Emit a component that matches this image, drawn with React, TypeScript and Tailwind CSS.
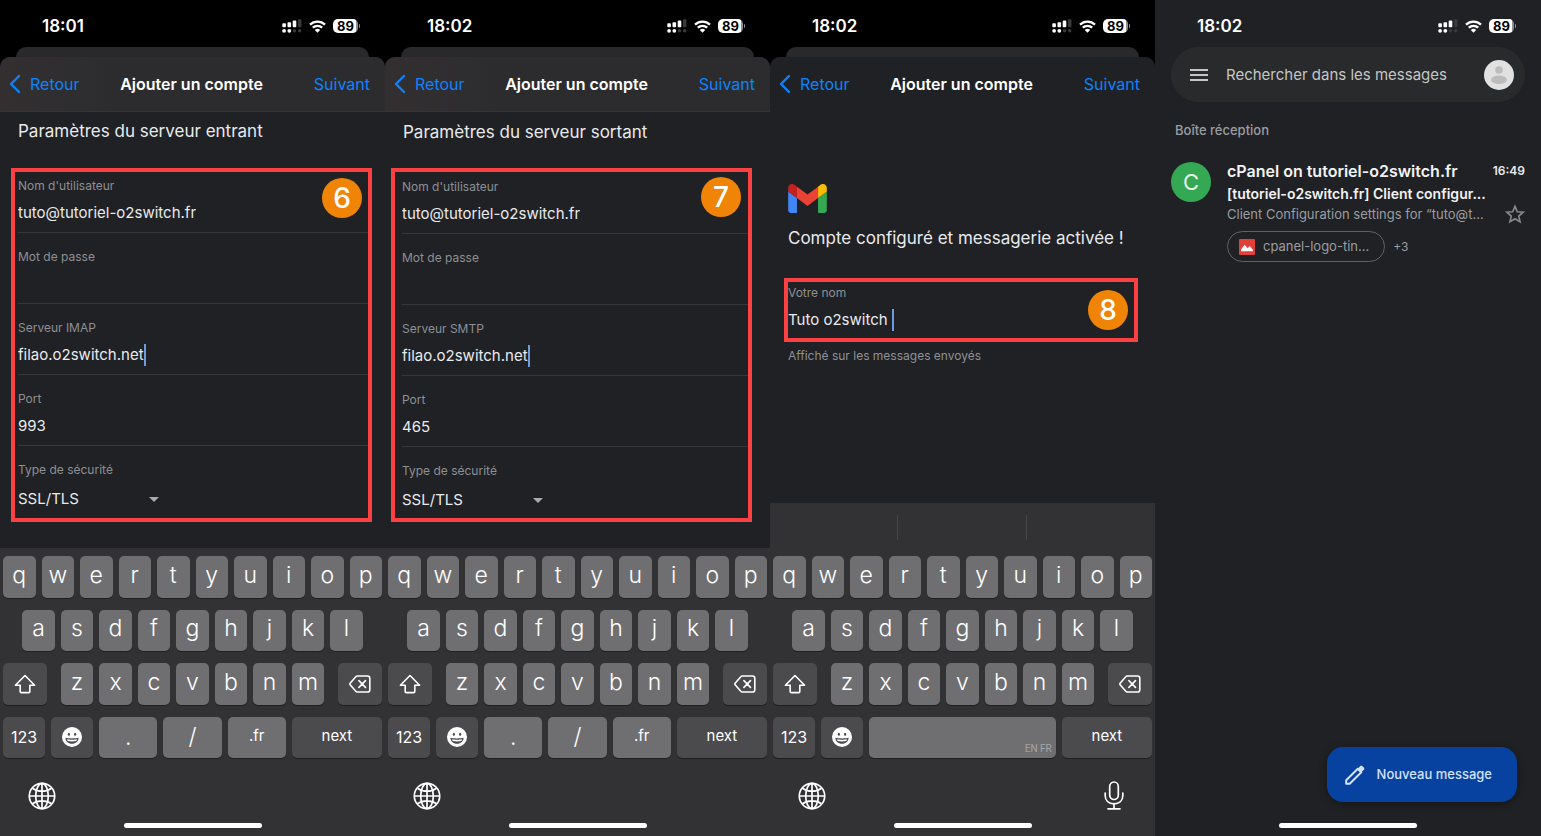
import React from "react";

function SignalIcon() {
  return (
    <svg viewBox="0 0 20 14" className="h-[14px] w-5" fill="#fff" aria-hidden="true">
      <rect x="0.3" y="4.2" width="3.6" height="4" rx="0.9" />
      <rect x="5.5" y="3.2" width="3.6" height="5" rx="0.9" />
      <rect x="10.7" y="1.5" width="3.6" height="6.7" rx="0.9" />
      <rect x="15.9" y="0.2" width="3.6" height="8" rx="0.9" fill="#3a3a3c" />
      <circle cx="2.1" cy="11.8" r="1.9" />
      <circle cx="7.3" cy="11.8" r="1.9" />
      <circle cx="12.5" cy="11.8" r="1.7" fill="#3a3a3c" />
      <circle cx="17.7" cy="11.8" r="1.7" fill="#3a3a3c" />
    </svg>
  );
}

function WifiIcon() {
  return (
    <svg viewBox="0 0 17 13" className="h-[13px] w-[17px]" aria-hidden="true">
      <path d="M1 4.7a10.8 10.8 0 0 1 15 0" fill="none" stroke="#fff" strokeWidth="2.3" />
      <path d="M3.8 7.7a6.8 6.8 0 0 1 9.4 0" fill="none" stroke="#fff" strokeWidth="2.3" />
      <path d="M8.5 12.7 5.8 10a3.9 3.9 0 0 1 5.4 0Z" fill="#fff" />
    </svg>
  );
}

function StatusBar({ time }: { time: string }) {
  return (
    <div className="flex h-[47px] shrink-0 items-start justify-between pt-[14px] pr-[25px] pl-[42px]">
      <span className="text-[17px] leading-6 font-semibold text-white">{time}</span>
      <div className="flex h-6 items-center gap-[7px]">
        <SignalIcon />
        <WifiIcon />
        <div className="flex items-center gap-px">
          <div className="flex h-[14px] w-[25px] items-center justify-center rounded-[5px] bg-linear-to-r from-white from-92% to-[#8e8e93] to-92% text-[13px] leading-[14px] font-bold text-black">
            89
          </div>
          <span className="h-1 w-px rounded-r bg-[#8e8e93]" />
        </div>
      </div>
    </div>
  );
}

function SheetHeader({ tinted }: { tinted: boolean }) {
  const look = tinted
    ? "border-[#343437] bg-linear-to-r from-[#332f31] via-[#2c2c2e] via-30% to-[#2c2c2e]"
    : "border-[#202124] bg-[#202124]";
  return (
    <header
      className={`grid h-[55px] shrink-0 grid-cols-[1fr_auto_1fr] items-center rounded-t-[10px] border-b pr-[15px] pl-[9px] text-[16px] leading-6 ${look}`}
    >
      <button type="button" className="flex items-center gap-[9px] text-[#0a84ff]">
        <svg viewBox="0 0 12 20" className="h-5 w-3" fill="none" stroke="currentColor" strokeWidth="2.4" strokeLinecap="round" strokeLinejoin="round" aria-hidden="true">
          <path d="M10 2 2 10l8 8" />
        </svg>
        Retour
      </button>
      <h1 className="pl-1 font-semibold text-white">Ajouter un compte</h1>
      <button type="button" className="justify-self-end text-[#0a84ff]">
        Suivant
      </button>
    </header>
  );
}

type FieldProps = {
  id: string;
  label: string;
  value: string;
  type?: string;
  caret?: boolean;
  underlined?: boolean;
};

function Field({ id, label, value, type = "text", caret = false, underlined = true }: FieldProps) {
  return (
    <div className={underlined ? "border-b border-[#37383b] pb-[7px]" : "pb-[6px]"}>
      <label htmlFor={id} className="block text-[12px] leading-4 text-[#8d9094]">
        {label}
      </label>
      <div className="mt-[7px] flex h-6 items-center">
        <input
          id={id}
          type={type}
          defaultValue={value}
          className="field-sizing-content min-w-2 bg-transparent text-[15px] leading-6 whitespace-pre text-[#e8eaed] outline-none"
        />
        {caret && <span className="h-[22px] w-[2px] bg-[#6f9ae0]" />}
      </div>
    </div>
  );
}

function StepBadge({ n, place }: { n: number; place: string }) {
  return (
    <span
      className={`absolute flex size-10 items-center justify-center rounded-full bg-[#f08407] text-[28px] leading-10 font-medium text-white ${place}`}
    >
      {n}
    </span>
  );
}

type ServerFormProps = {
  prefix: string;
  title: string;
  hostLabel: string;
  port: string;
  step: number;
  titleSpace: string;
  boxSpace: string;
  badgePlace: string;
};

function ServerForm({ prefix, title, hostLabel, port, step, titleSpace, boxSpace, badgePlace }: ServerFormProps) {
  return (
    <form>
      <div className="h-14">
        <h2 className={`pl-[18px] text-[17px] leading-6 text-[#e8eaed] ${titleSpace}`}>{title}</h2>
      </div>
      <div className={`relative flex flex-col gap-4 border-4 border-[#fd4142] ${boxSpace}`}>
        <Field id={`${prefix}-user`} label="Nom d'utilisateur" value="tuto@tutoriel-o2switch.fr" />
        <Field id={`${prefix}-pass`} label="Mot de passe" value="" type="password" />
        <Field id={`${prefix}-host`} label={hostLabel} value="filao.o2switch.net" caret />
        <Field id={`${prefix}-port`} label="Port" value={port} />
        <div>
          <label htmlFor={`${prefix}-tls`} className="block text-[12px] leading-4 text-[#8d9094]">
            Type de sécurité
          </label>
          <div className="relative mt-[6px] w-[141px]">
            <select
              id={`${prefix}-tls`}
              className="block h-[30px] w-full appearance-none bg-transparent text-[15px] text-[#e8eaed] outline-none"
            >
              <option>SSL/TLS</option>
            </select>
            <svg viewBox="0 0 10 5" className="pointer-events-none absolute top-[13px] right-0 h-[5px] w-[10px]" fill="#a6abb0" aria-hidden="true">
              <path d="M0 0h10L5 5Z" />
            </svg>
          </div>
        </div>
        <StepBadge n={step} place={badgePlace} />
      </div>
    </form>
  );
}

const lightKey = "rounded-[5px] bg-[#6f6f71] text-white shadow-[0_1px_0_#1f1f20]";
const darkKey = "flex items-center justify-center rounded-[5px] bg-[#4b4b4d] text-white shadow-[0_1px_0_#1f1f20]";

function LetterKey({ char, start = "" }: { char: string; start?: string }) {
  return (
    <button type="button" className={`col-span-2 flex items-center justify-center pb-1 text-[23px] leading-8 font-light ${lightKey} ${start}`}>
      {char}
    </button>
  );
}

function EmojiIcon() {
  return (
    <svg viewBox="0 0 20 20" className="size-5" aria-hidden="true">
      <circle cx="10" cy="10" r="10" fill="#fff" />
      <ellipse cx="6.9" cy="7.2" rx="1.1" ry="1.5" fill="#4b4b4d" />
      <ellipse cx="13.1" cy="7.2" rx="1.1" ry="1.5" fill="#4b4b4d" />
      <path d="M3.4 10.8c2 .8 11.2.8 13.2 0 0 3.5-2.8 6-6.6 6s-6.6-2.5-6.6-6Z" fill="#4b4b4d" />
      <path d="M4.8 12.3c2.400.6 8 .6 10.400 0-.2.8-.5 1.300-1 1.800-2.200.5-6.200.5-8.400 0-.5-.5-.8-1-1-1.800Z" fill="#fff" />
    </svg>
  );
}

function GlobeIcon() {
  return (
    <svg viewBox="0 0 28 28" className="size-7" fill="none" stroke="#fff" strokeWidth="1.7" aria-hidden="true">
      <circle cx="14" cy="14" r="12.7" />
      <ellipse cx="14" cy="14" rx="6.3" ry="12.7" />
      <path d="M14 1.3v25.4M1.3 14h25.4M4.5 6.2c2.5 1.9 5.8 2.9 9.5 2.9s7-1 9.5-2.9M4.5 21.8c2.5-1.9 5.8-2.9 9.5-2.9s7 1 9.5 2.9" />
    </svg>
  );
}

function MicIcon() {
  return (
    <svg viewBox="0 0 20 30" className="h-[30px] w-5" fill="none" stroke="#fff" strokeWidth="1.7" strokeLinecap="round" aria-hidden="true">
      <rect x="5.7" y="1" width="8.6" height="17.5" rx="4.3" />
      <path d="M1.2 12v2.8c0 5 3.7 8 8.8 8s8.8-3 8.8-8V12M10 22.8v5M4 27.8h12" />
    </svg>
  );
}

function HomeBar() {
  return <div className="mx-auto h-[5px] w-[138px] shrink-0 rounded-full bg-white" />;
}

function Keyboard({ withSpace = false }: { withSpace?: boolean }) {
  return (
    <div className="mt-auto bg-[#323234]">
      {withSpace && (
        <div className="grid h-[45px] grid-cols-3 items-center divide-x divide-[#454548] pt-1">
          <span className="h-[25px]" />
          <span className="h-[25px]" />
          <span className="h-[25px]" />
        </div>
      )}
      <div className="px-[3px] pt-2">
        <div className="grid h-[202px] grid-cols-20 grid-rows-4 gap-x-[6px] gap-y-3">
          {["q", "w", "e", "r", "t", "y", "u", "i", "o", "p"].map((c) => (
            <LetterKey key={c} char={c} />
          ))}
          {["a", "s", "d", "f", "g", "h", "j", "k", "l"].map((c) => (
            <LetterKey key={c} char={c} start={c === "a" ? "col-start-2" : ""} />
          ))}
          <button type="button" aria-label="Majuscule" className={`col-span-3 col-start-1 mr-2 ${darkKey}`}>
            <svg viewBox="0 0 22 20" className="h-5 w-[22px]" fill="none" stroke="#fff" strokeWidth="1.6" strokeLinejoin="round" aria-hidden="true">
              <path d="M11 1.5 1.4 11.2h4.8v6.3c0 .7.4 1.1 1.1 1.1h7.4c.7 0 1.1-.4 1.1-1.1v-6.3h4.8Z" />
            </svg>
          </button>
          {["z", "x", "c", "v", "b", "n", "m"].map((c) => (
            <LetterKey key={c} char={c} />
          ))}
          <button type="button" aria-label="Effacer" className={`col-span-3 ml-2 ${darkKey}`}>
            <svg viewBox="0 0 22 18" className="h-[18px] w-[22px]" fill="none" stroke="#fff" strokeWidth="1.6" strokeLinecap="round" strokeLinejoin="round" aria-hidden="true">
              <path d="M8.3 1h10.2c1.4 0 2.3.9 2.3 2.3v11.4c0 1.4-.9 2.3-2.3 2.3H8.3c-.6 0-1.1-.2-1.5-.7L1.3 10c-.6-.7-.6-1.3 0-2l5.5-6.3c.4-.5.9-.7 1.5-.7Z" />
              <path d="m9.9 5.6 6.6 6.8M16.5 5.6l-6.6 6.8" />
            </svg>
          </button>
          <div className="col-span-5 flex gap-[6px]">
            <button type="button" className={`flex-1 text-[16px] ${darkKey}`}>
              123
            </button>
            <button type="button" aria-label="Emoji" className={`flex-1 ${darkKey}`}>
              <EmojiIcon />
            </button>
          </div>
          <div className="col-span-10 flex gap-[6px]">
            {withSpace ? (
              <button type="button" className={`flex flex-1 items-end justify-end pr-1 pb-[2px] font-['Roboto',sans-serif] text-[10px] leading-[14px] ${lightKey}`}>
                <span className="text-[#a4a4a6]">EN FR</span>
              </button>
            ) : (
              <>
                <button type="button" className={`flex-1 text-[23px] font-light ${lightKey}`}>
                  .
                </button>
                <button type="button" className={`flex-1 text-[23px] font-light ${lightKey}`}>
                  /
                </button>
                <button type="button" className={`flex-1 pb-[2px] text-[15px] ${lightKey}`}>
                  .fr
                </button>
              </>
            )}
          </div>
          <button type="button" className={`col-span-5 pb-[2px] text-[15px] ${darkKey}`}>
            next
          </button>
        </div>
      </div>
      <div className="flex h-[65px] items-center justify-between pt-[11px] pr-[31px] pl-7">
        <button type="button" aria-label="Changer de clavier">
          <GlobeIcon />
        </button>
        {withSpace && (
          <button type="button" aria-label="Dictée">
            <MicIcon />
          </button>
        )}
      </div>
      <div className="pb-2">
        <HomeBar />
      </div>
    </div>
  );
}

function SheetScreen({ time, tinted, children }: { time: string; tinted: boolean; children: React.ReactNode }) {
  return (
    <section className="flex min-w-0 flex-col bg-black">
      <StatusBar time={time} />
      <div className="mx-4 h-[10px] shrink-0 rounded-t-[10px] bg-[#29292c]" />
      <div className="flex flex-1 flex-col rounded-t-[10px] bg-[#202124]">
        <SheetHeader tinted={tinted} />
        {children}
      </div>
    </section>
  );
}

function GmailLogo() {
  return (
    <svg viewBox="52 42 88 66" className="h-[29px] w-[39px]" role="img" aria-label="Gmail">
      <path fill="#4285f4" d="M58 108h14V74L52 59v43c0 3.32 2.69 6 6 6" />
      <path fill="#34a853" d="M120 108h14c3.32 0 6-2.69 6-6V59l-20 15" />
      <path fill="#fbbc04" d="M120 48v26l20-15v-8c0-7.42-8.47-11.65-14.4-7.2" />
      <path fill="#ea4335" d="M72 74V48l24 18 24-18v26L96 92" />
      <path fill="#c5221f" d="M52 51v8l20 15V48l-5.6-4.2c-5.94-4.45-14.4-.22-14.4 7.2" />
    </svg>
  );
}

function InboxScreen() {
  return (
    <section className="flex min-w-0 flex-col bg-[#202124]">
      <StatusBar time="18:02" />
      <div className="mx-4 flex h-[55px] shrink-0 items-center rounded-full bg-[#292a2c] pr-[11px] pl-[19px]">
        <button type="button" aria-label="Menu">
          <svg viewBox="0 0 18 14" className="h-[14px] w-[18px]" stroke="#c4c7c5" strokeWidth="2" aria-hidden="true">
            <path d="M0 2h18M0 7h18M0 12h18" />
          </svg>
        </button>
        <input
          type="search"
          aria-label="Rechercher dans les messages"
          placeholder="Rechercher dans les messages"
          className="ml-[18px] min-w-0 flex-1 bg-transparent text-[15px] leading-6 text-[#c4c7c5] outline-none placeholder:text-[#c4c7c5]"
        />
        <button type="button" aria-label="Compte">
          <svg viewBox="0 0 30 30" className="size-[30px]" aria-hidden="true">
            <circle cx="15" cy="15" r="15" fill="#e1e1e1" />
            <circle cx="15" cy="10" r="3.8" fill="#bcbcbc" />
            <ellipse cx="15" cy="19.8" rx="8" ry="4.3" fill="#bcbcbc" />
          </svg>
        </button>
      </div>
      <h2 className="mt-5 pl-5 text-[13px] leading-4 font-medium text-[#9a9da1]">Boîte réception</h2>
      <article className="mt-[22px] flex gap-4 px-4">
        <span className="mt-[2px] flex size-10 shrink-0 items-center justify-center rounded-full bg-[#34a853] text-[22px] text-[#e6f4ea]">C</span>
        <div className="min-w-0 flex-1">
          <div className="flex h-[22px] items-center justify-between">
            <h3 className="text-[16px] leading-[22px] font-semibold text-[#f1f3f4]">cPanel on tutoriel-o2switch.fr</h3>
            <time className="text-[12px] font-semibold text-[#e8eaed]">16:49</time>
          </div>
          <p className="mt-px text-[14px] leading-[22px] font-semibold text-[#f1f3f4]">[tutoriel-o2switch.fr] Client configur...</p>
          <div className="flex h-[18px] items-center justify-between">
            <p className="text-[13px] leading-[18px] whitespace-nowrap text-[#9a9da1]">Client Configuration settings for “tuto@t...</p>
            <button type="button" aria-label="Suivre">
              <svg viewBox="0 0 24 24" className="size-5" fill="none" stroke="#85888c" strokeWidth="2" aria-hidden="true">
                <path d="m12 2.8 2.8 6.5 7 .6-5.3 4.6 1.6 6.9-6.100-3.700-6.100 3.700 1.600-6.900-5.300-4.600 7-.6Z" />
              </svg>
            </button>
          </div>
          <div className="mt-2 flex items-center gap-2 text-[#9a9da1]">
            <button type="button" className="flex h-[31px] items-center gap-2 rounded-full border border-[#5f6368] pr-[15px] pl-[11px] text-[13px]">
              <svg viewBox="0 0 16 16" className="size-4" aria-hidden="true">
                <rect width="16" height="16" rx="1" fill="#e04136" />
                <path d="M2 12.2V10.5l3.7-4.7 3 3.5 2-2.2 3.3 3.9v1.2Z" fill="#fff" />
              </svg>
              cpanel-logo-tin...
            </button>
            <span className="text-[12px]">+3</span>
          </div>
        </div>
      </article>
      <button
        type="button"
        className="mt-auto mr-6 mb-[21px] flex h-[55px] items-center gap-3 self-end rounded-[16px] bg-[#0842a0] pr-[25px] pl-[18px] text-[13px] font-medium text-[#d3e3fd] shadow-[0_2px_8px_rgba(0,0,0,0.35)]"
      >
        <svg viewBox="0 0 20 20" className="size-5" aria-hidden="true">
          <path d="M1.200 18.800v-3.500L12.800 3.700l3.500 3.500L4.700 18.800Z" fill="none" stroke="#d3e3fd" strokeWidth="2" strokeLinejoin="round" />
          <path d="m12.200 4.200 3.100-3.100c.6-.6 1.400-.6 2 0l1.600 1.600c.6.6.6 1.400 0 2l-3.100 3.100Z" fill="#d3e3fd" />
        </svg>
        Nouveau message
      </button>
      <div className="pb-2">
        <HomeBar />
      </div>
    </section>
  );
}

export default function App() {
  return (
    <main className="grid min-h-screen grid-cols-[385fr_385fr_385fr_386fr] bg-[#202124] font-['Inter',sans-serif]">
      <SheetScreen time="18:01" tinted>
        <ServerForm
          prefix="in"
          title="Paramètres du serveur entrant"
          hostLabel="Serveur IMAP"
          port="993"
          step={6}
          titleSpace="pt-[7px]"
          boxSpace="mr-[13px] ml-[11px] pt-[6px] pb-1 pl-[3px]"
          badgePlace="top-[6px] right-[6px]"
        />
        <Keyboard />
      </SheetScreen>
      <SheetScreen time="18:02" tinted>
        <ServerForm
          prefix="out"
          title="Paramètres du serveur sortant"
          hostLabel="Serveur SMTP"
          port="465"
          step={7}
          titleSpace="pt-2"
          boxSpace="mr-[18px] ml-[6px] pt-[7px] pb-[3px] pl-[7px]"
          badgePlace="top-[5px] right-[7px]"
        />
        <Keyboard />
      </SheetScreen>
      <SheetScreen time="18:02" tinted={false}>
        <form className="pt-[72px]">
          <div className="pl-[18px]">
            <GmailLogo />
            <h2 className="mt-[13px] text-[17px] leading-6 whitespace-nowrap text-[#e8eaed]">Compte configuré et messagerie activée !</h2>
          </div>
          <div className="relative mt-7 mr-[17px] ml-[14px] border-4 border-[#fd4142] pt-[3px]">
            <Field id="name" label="Votre nom" value="Tuto o2switch " caret underlined={false} />
            <StepBadge n={8} place="top-2 right-[6px]" />
          </div>
          <p className="mt-[6px] pl-[18px] text-[12px] leading-4 text-[#8d9094]">Affiché sur les messages envoyés</p>
        </form>
        <Keyboard withSpace />
      </SheetScreen>
      <InboxScreen />
    </main>
  );
}
